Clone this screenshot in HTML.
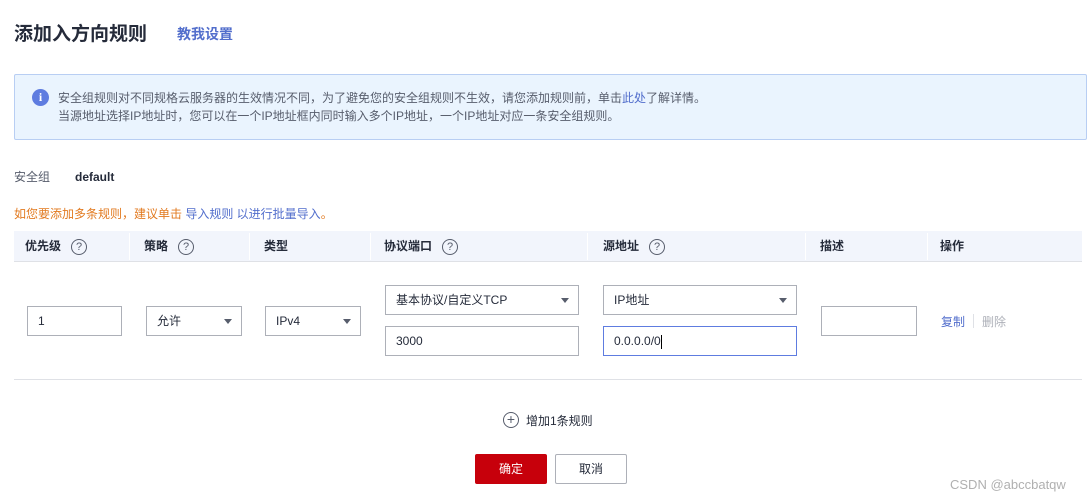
<!DOCTYPE html>
<html><head><meta charset="utf-8"><style>
*{box-sizing:border-box;margin:0;padding:0}
body{width:1089px;height:502px;background:#fff;position:relative;overflow:hidden;font-family:"Liberation Sans","Noto Sans CJK SC",sans-serif;color:#252b3a;font-size:12px}
.a{position:absolute;white-space:nowrap}
.in{position:absolute;border:1px solid #adb0b8;background:#fff;height:30px;line-height:28px;padding-left:10px;font-size:12px;color:#252b3a}
.sel::after{content:"";position:absolute;right:9px;top:12px;border-left:4px solid transparent;border-right:4px solid transparent;border-top:5px solid #575d6c}
.q{display:inline-block;width:16px;height:16px;border:1px solid #575d6c;border-radius:50%;text-align:center;line-height:14px;font-size:11px;font-weight:normal;color:#575d6c;vertical-align:middle;margin-left:10px}
.th{position:absolute;top:231px;height:31px;line-height:31px;font-weight:bold;font-size:12px;color:#252b3a}
</style></head><body>
<div class="a" style="left:14px;top:19px;font-size:19px;font-weight:bold;color:#252b3a">添加入方向规则</div>
<div class="a" style="left:177px;top:24px;font-size:14px;font-weight:bold;color:#526ecc">教我设置</div>
<div class="a" style="left:14px;top:74px;width:1073px;height:66px;background:#eaf4fe;border:1px solid #b8cef3;border-radius:2px"></div>
<div class="a" style="left:32px;top:89px;width:17px;height:17px;border-radius:50%;background:#5e7ce0;color:#fff;font-weight:bold;font-size:12px;text-align:center;line-height:17px;font-family:'Liberation Serif',serif">i</div>
<div class="a" style="left:58px;top:89px;font-size:12px;color:#575d6c;line-height:18px">安全组规则对不同规格云服务器的生效情况不同，为了避免您的安全组规则不生效，请您添加规则前，单击<span style="color:#526ecc">此处</span>了解详情。<br>当源地址选择IP地址时，您可以在一个IP地址框内同时输入多个IP地址，一个IP地址对应一条安全组规则。</div>
<div class="a" style="left:14px;top:168px;font-size:12px;color:#575d6c">安全组</div>
<div class="a" style="left:75px;top:170px;font-size:12px;font-weight:bold">default</div>
<div class="a" style="left:14px;top:205px;font-size:12px;color:#e27a20">如您要添加多条规则，建议单击 <span style="color:#526ecc">导入规则 以进行批量导入</span>。</div>
<div class="a" style="left:14px;top:231px;width:1068px;height:31px;background:#f2f5fc;border-bottom:1px solid #dfe1e6"></div>
<div class="a" style="left:129px;top:233px;width:1px;height:27px;background:#fff"></div>
<div class="a" style="left:249px;top:233px;width:1px;height:27px;background:#fff"></div>
<div class="a" style="left:370px;top:233px;width:1px;height:27px;background:#fff"></div>
<div class="a" style="left:587px;top:233px;width:1px;height:27px;background:#fff"></div>
<div class="a" style="left:805px;top:233px;width:1px;height:27px;background:#fff"></div>
<div class="a" style="left:927px;top:233px;width:1px;height:27px;background:#fff"></div>
<div class="th" style="left:25px">优先级<span class="q">?</span></div>
<div class="th" style="left:144px">策略<span class="q">?</span></div>
<div class="th" style="left:264px">类型</div>
<div class="th" style="left:384px">协议端口<span class="q">?</span></div>
<div class="th" style="left:603px">源地址<span class="q">?</span></div>
<div class="th" style="left:820px">描述</div>
<div class="th" style="left:940px">操作</div>
<div class="in" style="left:27px;top:306px;width:95px">1</div>
<div class="in sel" style="left:146px;top:306px;width:96px">允许</div>
<div class="in sel" style="left:265px;top:306px;width:96px">IPv4</div>
<div class="in sel" style="left:385px;top:285px;width:194px">基本协议/自定义TCP</div>
<div class="in" style="left:385px;top:326px;width:194px">3000</div>
<div class="in sel" style="left:603px;top:285px;width:194px">IP地址</div>
<div class="in" style="left:603px;top:326px;width:194px;border-color:#5e7ce0">0.0.0.0/0<span style="display:inline-block;width:1px;height:14px;background:#000;vertical-align:middle"></span></div>
<div class="in" style="left:821px;top:306px;width:96px"></div>
<div class="a" style="left:941px;top:313px;color:#526ecc">复制</div>
<div class="a" style="left:973px;top:314px;width:1px;height:14px;background:#dfe1e6"></div>
<div class="a" style="left:982px;top:313px;color:#adb0b8">删除</div>
<div class="a" style="left:14px;top:379px;width:1068px;height:1px;background:#dfe1e6"></div>
<div class="a" style="left:503px;top:412px;width:16px;height:16px;border:1px solid #575d6c;border-radius:50%;text-align:center;line-height:13px;font-size:14px;color:#575d6c">+</div>
<div class="a" style="left:526px;top:412px;font-size:12px">增加1条规则</div>
<div class="a" style="left:475px;top:454px;width:72px;height:30px;background:#c7000b;border-radius:2px;color:#fff;text-align:center;line-height:30px">确定</div>
<div class="a" style="left:555px;top:454px;width:72px;height:30px;border:1px solid #adb0b8;border-radius:2px;text-align:center;line-height:28px">取消</div>
<div class="a" style="left:950px;top:477px;font-size:13px;color:#b0b0b0">CSDN @abccbatqw</div>
</body></html>
